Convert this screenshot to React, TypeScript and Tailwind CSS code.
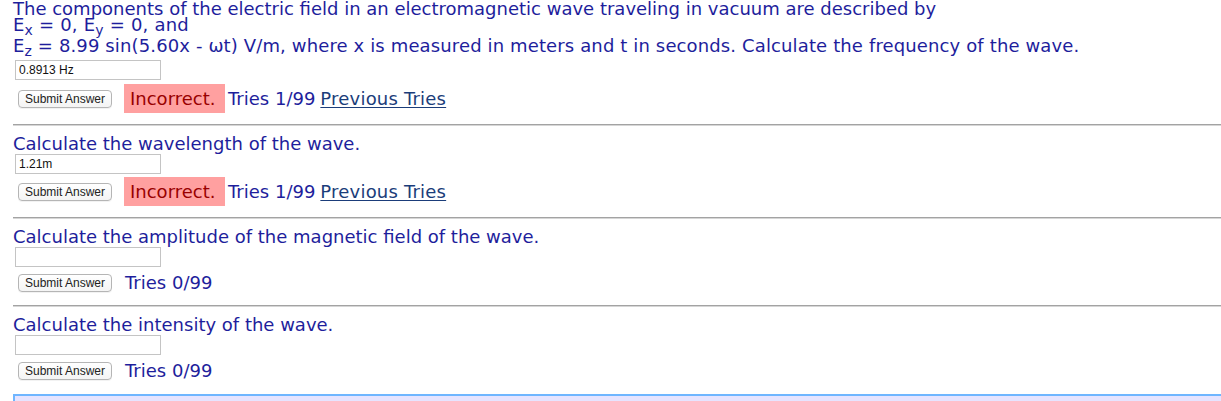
import React from "react";

function Submit() {
  return (
    <button
      type="button"
      className="h-[18px] w-[94px] rounded-[4px] border border-[#b5b5b5] bg-gradient-to-b from-white to-[#f4f4f4] text-[12px] leading-[16px] text-[#222] font-['Liberation_Sans',Arial,sans-serif] shadow-[0_1px_0_rgba(0,0,0,0.05)]"
    >
      Submit Answer
    </button>
  );
}

function Field({ value }: { value?: string }) {
  return (
    <div className="h-[20px] w-[146px] border border-[#c4c4c4] bg-white px-[3px] text-[12px] leading-[18px] text-[#111] font-['Liberation_Sans',Arial,sans-serif]">
      {value}
    </div>
  );
}

function Status({ incorrect, tries }: { incorrect?: boolean; tries: string }) {
  return (
    <div className={incorrect ? "flex items-center h-[29px]" : "flex items-center h-[25px]"}>
      <div className="ml-[5px] flex items-center">
        <Submit />
      </div>
      {incorrect ? (
        <>
          <span className="ml-[12px] h-[29px] w-[101px] bg-[#ffa0a0] text-[#990000] pl-[6px] leading-[29px]">
            Incorrect.
          </span>
          <span className="ml-[3px]">Tries {tries}</span>
          <span className="ml-[5px] underline text-[#1b3d7a] underline-offset-[2px] decoration-1 tracking-[0.2px]">Previous Tries</span>
        </>
      ) : (
        <span className="ml-[13px]">Tries {tries}</span>
      )}
    </div>
  );
}

function Rule({ className }: { className: string }) {
  return (
    <div className={className}>
      <div className="h-[1px] bg-[#a3a3a3]" />
      <div className="h-[1px] bg-[#d6d6d6]" />
    </div>
  );
}

function Question({ text, className }: { text: string; className: string }) {
  return <div className={className}>{text}</div>;
}

export default function App() {
  return (
    <div className="w-[1221px] h-[401px] overflow-hidden bg-white pl-[13px] pt-[1px] font-['DejaVu_Sans',Verdana,sans-serif] text-[18px] text-[#1e1e9c]">
      <div className="leading-[16px]">
        The components of the electric field in an electromagnetic wave traveling in vacuum are described by
      </div>
      <div className="leading-[16px] tracking-[0.2px]">
        E<sub className="text-[14px]">x</sub> = 0, E<sub className="text-[14px]">y</sub> = 0, and
      </div>
      <div className="leading-[16px] mt-[5px] tracking-[0.13px]">
        E<sub className="text-[14px]">z</sub> = 8.99 sin(5.60x - ωt) V/m, where x is measured in meters and t in seconds. Calculate the frequency of the wave.
      </div>
      <div className="mt-[6px] ml-[2px]">
        <Field value="0.8913 Hz" />
      </div>
      <div className="mt-[4px]">
        <Status incorrect tries="1/99" />
      </div>
      <Rule className="mt-[11px]" />

      <Question className="mt-[9px] mb-[1px] leading-[18px]" text="Calculate the wavelength of the wave." />
      <div className="ml-[2px]">
        <Field value="1.21m" />
      </div>
      <div className="mt-[3px]">
        <Status incorrect tries="1/99" />
      </div>
      <Rule className="mt-[11px]" />

      <Question className="mt-[9px] mb-[1px] leading-[18px]" text="Calculate the amplitude of the magnetic field of the wave." />
      <div className="ml-[2px]">
        <Field />
      </div>
      <div className="mt-[3px]">
        <Status tries="0/99" />
      </div>
      <Rule className="mt-[10px]" />

      <Question className="mt-[9px] mb-[1px] leading-[18px]" text="Calculate the intensity of the wave." />
      <div className="ml-[2px]">
        <Field />
      </div>
      <div className="mt-[3px]">
        <Status tries="0/99" />
      </div>
      <div className="mt-[11px] h-[20px] border-t-2 border-l-2 border-[#6fb6ff] bg-[#e6e4ff]" />
    </div>
  );
}
